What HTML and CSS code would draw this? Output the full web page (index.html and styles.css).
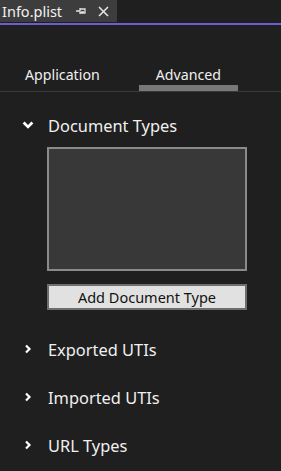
FILE: index.html
```html
<!DOCTYPE html>
<html>
<head>
<meta charset="utf-8">
<link rel="stylesheet" href="styles.css">
</head>
<body>
<div class="doc-tabs">
  <div class="doc-tab">
    <span class="doc-title">Info.plist</span>
    <svg class="pin" width="12" height="10" viewBox="0 0 12 10"><path d="M1 5H5M5 2V8M5 3H10V7H5M6 6H9" stroke="#e0e0e0" stroke-width="1.3" fill="none"/></svg>
    <svg class="close" width="11" height="11" viewBox="0 0 11 11"><path d="M1 1L10 10M10 1L1 10" stroke="#e8e8e8" stroke-width="1.5"/></svg>
  </div>
</div>
<div class="accent"></div>
<div class="tabs">
  <div class="tab">Application</div>
  <div class="tab active">Advanced</div>
</div>
<div class="sections">
  <div class="section open">
    <div class="sec-head">
      <svg class="chev" width="10" height="8" viewBox="0 0 10 8"><path d="M1.5 2L5 5.5L8.5 2" stroke="#fff" stroke-width="2.2" fill="none"/></svg>
      <span>Document Types</span>
    </div>
    <div class="sec-body">
      <div class="listbox"></div>
      <button class="btn">Add Document Type</button>
    </div>
  </div>
  <div class="section">
    <div class="sec-head">
      <svg class="chev" width="10" height="10" viewBox="0 0 10 10"><path d="M3 1.5L6.5 5L3 8.5" stroke="#fff" stroke-width="2.2" fill="none"/></svg>
      <span>Exported UTIs</span>
    </div>
  </div>
  <div class="section">
    <div class="sec-head">
      <svg class="chev" width="10" height="10" viewBox="0 0 10 10"><path d="M3 1.5L6.5 5L3 8.5" stroke="#fff" stroke-width="2.2" fill="none"/></svg>
      <span>Imported UTIs</span>
    </div>
  </div>
  <div class="section">
    <div class="sec-head">
      <svg class="chev" width="10" height="10" viewBox="0 0 10 10"><path d="M3 1.5L6.5 5L3 8.5" stroke="#fff" stroke-width="2.2" fill="none"/></svg>
      <span>URL Types</span>
    </div>
  </div>
</div>
</body>
</html>
```
FILE: styles.css
```css
html, body {
  margin: 0;
  padding: 0;
  background: #1f1f1f;
  font-family: "Noto Sans", "Open Sans", sans-serif;
  color: #f0f0f0;
  width: 281px;
  height: 471px;
  overflow: hidden;
}
.doc-tabs {
  display: flex;
  height: 22px;
}
.doc-tab {
  display: flex;
  align-items: center;
  width: 117px;
  background: #3d3d3d;
  box-sizing: border-box;
  padding-left: 2px;
}
.doc-title {
  font-size: 14.5px;
  color: #f2f2f2;
  line-height: 22px;
}
.pin {
  margin-left: 13px;
}
.close {
  margin-left: 11px;
}
.accent {
  height: 2px;
  margin-top: 1px;
  background: #6b5fd0;
}
.tabs {
  display: flex;
  height: 66px;
  align-items: flex-end;
  border-bottom: 1px solid #3a3a3a;
}
.tab {
  font-size: 14.2px;
  color: #f0f0f0;
  padding-bottom: 7px;
  position: relative;
}
.tab:first-child {
  margin-left: 25px;
}
.tab.active {
  margin-left: 56px;
}
.tab.active::after {
  content: "";
  position: absolute;
  left: -17px;
  width: 99px;
  bottom: 0;
  height: 6px;
  background: #787878;
}
.sections {
  display: flex;
  flex-direction: column;
}
.sec-head {
  display: flex;
  align-items: center;
  height: 48px;
  font-size: 16.4px;
  color: #f0f0f0;
}
.section:first-child .sec-head {
  height: 66px;
  margin-bottom: -11px;
}
.chev {
  margin-left: 21px;
  width: 14px;
  margin-right: 13px;
}
.section .chev {
  height: 10px;
}
.sec-body {
  display: flex;
  flex-direction: column;
  padding-left: 47px;
  gap: 13px;
  margin-bottom: 15px;
}
.listbox {
  width: 200px;
  height: 124px;
  box-sizing: border-box;
  background: #383838;
  border: 2px solid #8a8a8a;
}
.btn {
  width: 200px;
  height: 26px;
  box-sizing: border-box;
  background: #e1e1e1;
  border: 2px solid #6e6e6e;
  font-family: "Noto Sans", "Open Sans", sans-serif;
  font-size: 14.5px;
  color: #111;
  padding: 0;
}
```
